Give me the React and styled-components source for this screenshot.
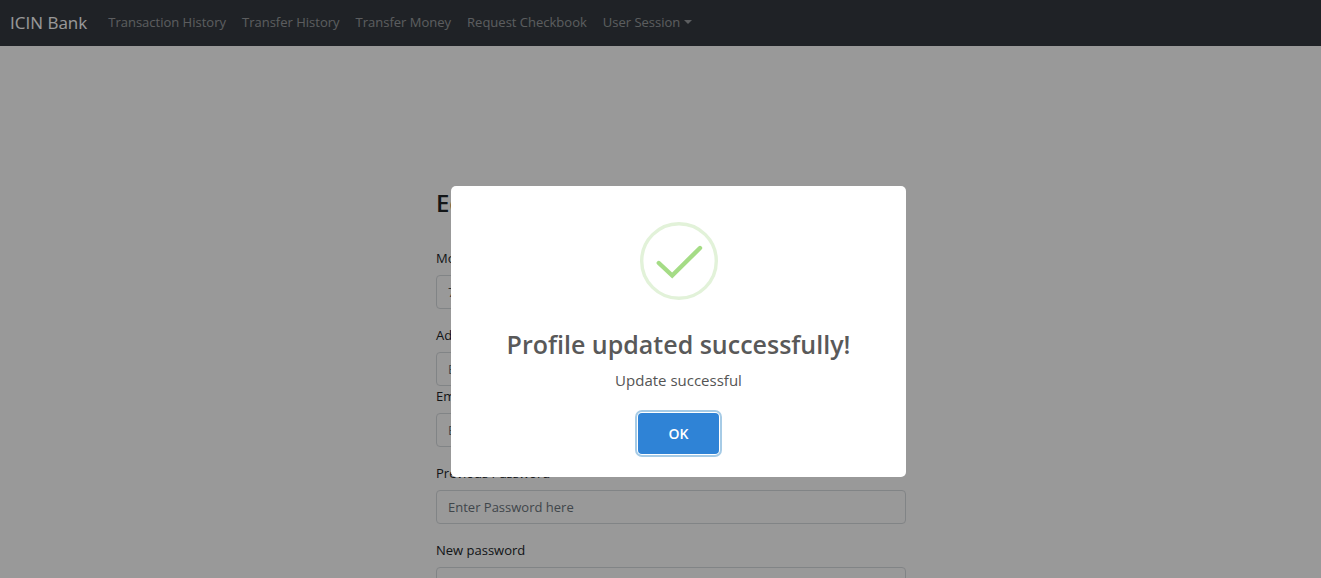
import React from "react";
import styled, { createGlobalStyle } from "styled-components";

const GlobalStyle = createGlobalStyle`
  *, *::before, *::after { box-sizing: border-box; }
  body {
    margin: 0;
    overflow: hidden;
    background: #ffffff;
    color: #212529;
    font-family: "Segoe UI", "Open Sans", "Noto Sans", sans-serif;
    font-size: 14px;
    line-height: 20px;
  }
`;

const Navbar = styled.nav`
  display: flex;
  align-items: center;
  height: 46px;
  padding: 0 10px;
  background: #343a40;
`;

const Brand = styled.a`
  margin-right: 21px;
  color: #ffffff;
  font-size: 17px;
  text-decoration: none;
  white-space: nowrap;
`;

const NavList = styled.ul`
  display: flex;
  gap: 16px;
  margin: 0;
  padding: 0 0 2px;
  list-style: none;
`;

const NavLink = styled.a`
  display: flex;
  align-items: center;
  gap: 4px;
  color: rgba(255, 255, 255, 0.5);
  font-size: 13px;
  text-decoration: none;
  white-space: nowrap;
`;

const Caret = styled.span`
  border-top: 4px solid currentColor;
  border-right: 4px solid transparent;
  border-left: 4px solid transparent;
`;

const Main = styled.main`
  display: flex;
  justify-content: center;
  padding: 142px 0 24px 21px;
`;

const Form = styled.form`
  width: 470px;
  max-width: 100%;
`;

const Heading = styled.h1`
  margin: 0 0 30px;
  font-size: 24px;
  font-weight: 600;
  line-height: 30px;
`;

const Field = styled.div`
  display: flex;
  flex-direction: column;
  gap: 7px;
  margin-bottom: ${({ $tight }) => ($tight ? "0" : "16px")};
`;

const Label = styled.label`
  font-size: 13px;
`;

const Input = styled.input`
  width: 100%;
  height: 34px;
  padding: 0 11px;
  border: 1px solid #d8dce0;
  border-radius: 4px;
  background: #ffffff;
  color: #495057;
  font: inherit;
  font-size: 13px;

  &::placeholder {
    color: #6c757d;
    opacity: 1;
  }
`;

const Backdrop = styled.div`
  position: fixed;
  inset: 0;
  display: flex;
  align-items: flex-start;
  justify-content: center;
  padding: 186px 0 0 36px;
  background: rgba(0, 0, 0, 0.4);
`;

const Dialog = styled.section`
  display: flex;
  flex-direction: column;
  align-items: center;
  width: 455px;
  max-width: 100%;
  padding: 36px 18px 23px;
  border-radius: 5px;
  background: #ffffff;
`;

const SuccessIcon = styled.svg`
  width: 78px;
  height: 78px;
`;

const Title = styled.h2`
  margin: 26px 0 0;
  color: #595959;
  font-size: 25px;
  font-weight: 600;
  line-height: 36px;
  text-align: center;
`;

const Message = styled.p`
  margin: 6px 0 21px;
  color: #545454;
  font-size: 15px;
  line-height: 24px;
`;

const ConfirmButton = styled.button`
  width: 81px;
  height: 41px;
  border: 0;
  border-radius: 4px;
  outline: none;
  background: #2f83d6;
  box-shadow: 0 0 0 1px #ffffff, 0 0 0 3px #a6cbe6;
  color: #ffffff;
  font: inherit;
  font-weight: 600;
  cursor: pointer;
`;

const links = [
  "Transaction History",
  "Transfer History",
  "Transfer Money",
  "Request Checkbook",
];

const fields = [
  { id: "mobile", label: "Mobile Number", value: "7894561230" },
  { id: "address", label: "Address", placeholder: "Enter Address here", tight: true },
  { id: "email", label: "Email", placeholder: "Enter Email here" },
  { id: "previous", label: "Previous Password", placeholder: "Enter Password here", type: "password" },
  { id: "new", label: "New password", placeholder: "New password", type: "password" },
];

export default function App() {
  return (
    <>
      <GlobalStyle />
      <Navbar>
        <Brand href="#">ICIN Bank</Brand>
        <NavList>
          {links.map((text) => (
            <li key={text}>
              <NavLink href="#">{text}</NavLink>
            </li>
          ))}
          <li>
            <NavLink href="#" aria-haspopup="true">
              User Session
              <Caret />
            </NavLink>
          </li>
        </NavList>
      </Navbar>
      <Main>
        <Form>
          <Heading>Edit Profile</Heading>
          {fields.map(({ id, label, value, placeholder, type, tight }) => (
            <Field key={id} $tight={tight}>
              <Label htmlFor={id}>{label}</Label>
              <Input
                id={id}
                type={type || "text"}
                defaultValue={value}
                placeholder={placeholder}
              />
            </Field>
          ))}
        </Form>
      </Main>
      <Backdrop>
        <Dialog role="dialog" aria-modal="true" aria-labelledby="dialog-title">
          <SuccessIcon viewBox="0 0 78 78" fill="none" aria-hidden="true">
            <circle cx="39" cy="39" r="37.3" stroke="#e2f2d9" strokeWidth="3.4" />
            <path
              d="M18.8 41 L32.2 53.5 L60 26"
              stroke="#a5dc86"
              strokeWidth="4.4"
              strokeLinecap="round"
              strokeLinejoin="miter"
            />
          </SuccessIcon>
          <Title id="dialog-title">Profile updated successfully!</Title>
          <Message>Update successful</Message>
          <ConfirmButton type="button">OK</ConfirmButton>
        </Dialog>
      </Backdrop>
    </>
  );
}
